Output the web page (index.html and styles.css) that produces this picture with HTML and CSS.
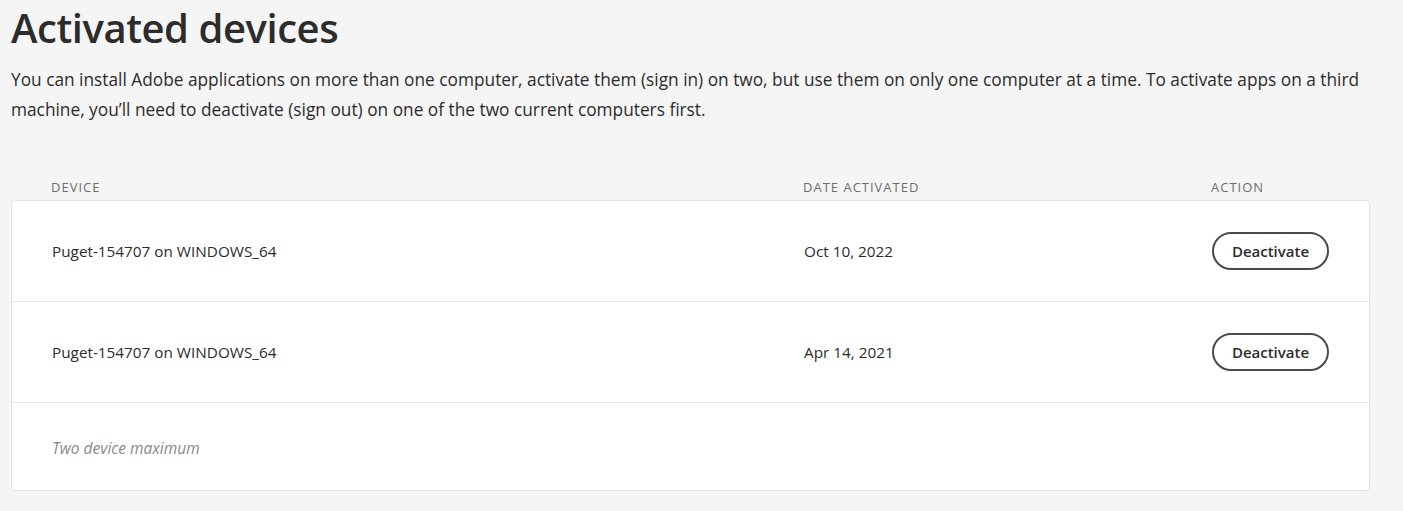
FILE: index.html
```html
<!DOCTYPE html>
<html>
<head>
<meta charset="utf-8">
<link rel="stylesheet" href="styles.css">
</head>
<body>
<main class="page">
  <h1 class="title">Activated devices</h1>
  <p class="intro">You can install Adobe applications on more than one computer, activate them (sign in) on two, but use them on only one computer at a time. To activate apps on a third machine, you’ll need to deactivate (sign out) on one of the two current computers first.</p>
  <div class="table">
    <div class="thead">
      <div class="col-device">Device</div>
      <div class="col-date">Date activated</div>
      <div class="col-action">Action</div>
    </div>
    <div class="card">
      <div class="row">
        <div class="col-device">Puget-154707 on WINDOWS_64</div>
        <div class="col-date">Oct 10, 2022</div>
        <div class="col-action"><button class="btn">Deactivate</button></div>
      </div>
      <div class="row">
        <div class="col-device">Puget-154707 on WINDOWS_64</div>
        <div class="col-date">Apr 14, 2021</div>
        <div class="col-action"><button class="btn">Deactivate</button></div>
      </div>
      <div class="foot">Two device maximum</div>
    </div>
  </div>
</main>
</body>
</html>
```
FILE: styles.css
```css
html, body {
  margin: 0;
  padding: 0;
  background: #f5f5f5;
}
body {
  font-family: "Open Sans", "Noto Sans", sans-serif;
  color: #2c2c2c;
}
.page {
  padding: 0 33px 0 11px;
}
.title {
  margin: 0;
  padding-top: 4px;
  font-size: 40px;
  line-height: 48px;
  font-weight: 600;
  color: #2c2c2c;
  letter-spacing: -0.45px;
}
.intro {
  margin: 13px 0 0;
  font-size: 17.3px;
  line-height: 30px;
  color: #2c2c2c;
}
.table {
  margin-top: 53px;
}
.thead {
  display: grid;
  grid-template-columns: 752px 408px 1fr;
  padding-left: 40px;
  height: 22px;
  font-size: 13px;
  letter-spacing: 1px;
  text-transform: uppercase;
  color: #6e6e6e;
}
.card {
  background: #fff;
  border: 1px solid #e3e3e3;
  border-radius: 4px;
}
.row {
  display: grid;
  grid-template-columns: 752px 408px 1fr;
  align-items: center;
  height: 101px;
  box-sizing: border-box;
  padding-left: 40px;
  border-bottom: 1px solid #e8e8e8;
  font-size: 15.3px;
  color: #2c2c2c;
}
.btn {
  font-family: inherit;
  font-size: 15px;
  font-weight: 600;
  color: #2c2c2c;
  background: #fff;
  border: 2px solid #4b4b4b;
  border-radius: 19px;
  height: 38px;
  width: 117px;
  padding: 0;
  cursor: pointer;
}
.foot {
  height: 87px;
  display: flex;
  align-items: center;
  padding-left: 40px;
  padding-top: 2px;
  box-sizing: border-box;
  font-style: italic;
  font-size: 15.5px;
  color: #8a8a8a;
}
```
